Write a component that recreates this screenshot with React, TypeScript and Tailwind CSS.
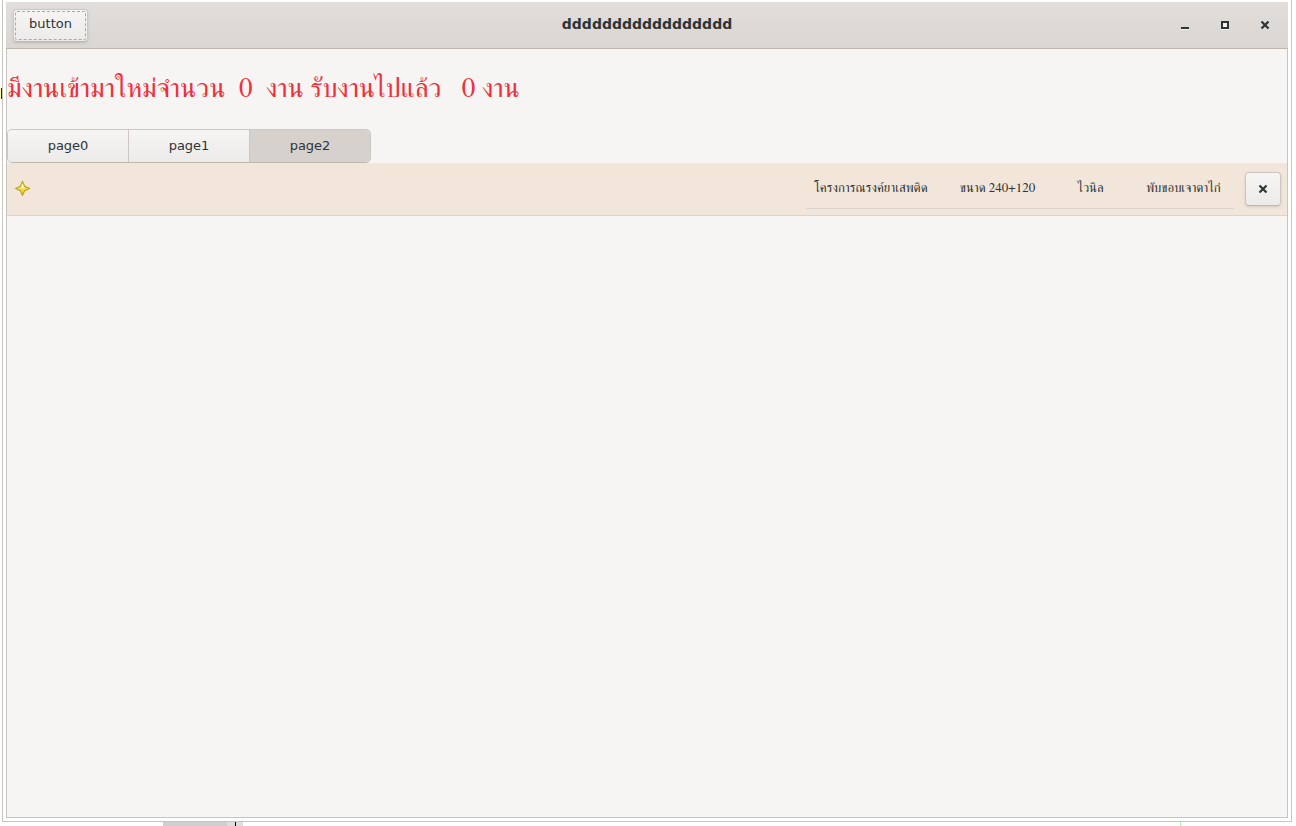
import { useState } from "react";

const pages = ["page0", "page1", "page2"];

function SparkleIcon() {
  return (
    <svg width="16" height="16" viewBox="0 0 16 16" className="mt-[17px]" aria-hidden="true">
      <defs>
        <linearGradient id="gold" x1="0" y1="0" x2="0" y2="1">
          <stop offset="0" stopColor="#fffbd0" />
          <stop offset="0.4" stopColor="#f5e96a" />
          <stop offset="1" stopColor="#e0c010" />
        </linearGradient>
      </defs>
      <path
        d="M7.5 1.2 L9.7 6.4 L14.7 8.5 L9.7 10.6 L7.5 15.6 L5.3 10.6 L.6 8.5 L5.3 6.4 Z"
        fill="url(#gold)"
        stroke="#c4a41c"
        strokeWidth="1.2"
        strokeLinejoin="round"
      />
      <path d="M7.5 4 L8.8 7.2 L7.5 8.5 L6.2 7.2 Z" fill="#fffef0" opacity="0.8" />
    </svg>
  );
}

function CrossIcon() {
  return (
    <svg width="16" height="16" viewBox="0 0 16 16" aria-hidden="true">
      <path d="M4.5 4.5 L11.5 11.5 M11.5 4.5 L4.5 11.5" stroke="#2e3436" strokeWidth="2.2" />
    </svg>
  );
}

function HeaderBar() {
  return (
    <header className="grid h-[47px] shrink-0 grid-cols-[1fr_auto_1fr] items-center border-b border-[#bfb8b1] bg-linear-to-b from-[#e1dedb] to-[#dad6d2] px-[7px]">
      <button
        type="button"
        className="h-[33px] w-[75px] justify-self-start rounded-[4px] border border-[#cdc7c2] border-b-[#bfb8b1] bg-linear-to-b from-[#f6f5f4] to-[#edebe9] p-px text-[13px] shadow-sm"
      >
        <span className="flex h-full items-center justify-center rounded-[2px] border border-dashed border-[#a9a9a6] pb-[2px]">
          button
        </span>
      </button>
      <h1 className="pb-[2px] text-[14px] leading-[20px] font-bold">ddddddddddddddddd</h1>
      <div className="flex gap-6 justify-self-end pr-2">
        <button type="button" aria-label="Minimize" className="size-4">
          <svg width="16" height="16" viewBox="0 0 16 16" aria-hidden="true">
            <path d="M4 10h8v2H4z" fill="#2e3436" />
            <path d="M4 12h8v1H4z" fill="#f4f3f2" />
          </svg>
        </button>
        <button type="button" aria-label="Maximize" className="size-4">
          <svg width="16" height="16" viewBox="0 0 16 16" aria-hidden="true">
            <path d="M4 12h8v1H4z" fill="#f4f3f2" />
            <path d="M5 5h6v6H5z" fill="#f4f3f2" stroke="#2e3436" strokeWidth="2" />
          </svg>
        </button>
        <button type="button" aria-label="Close" className="size-4">
          <CrossIcon />
        </button>
      </div>
    </header>
  );
}

function JobRow() {
  return (
    <section className="flex h-[53px] shrink-0 items-start border-b border-[#d8d4d0] bg-[#f2e6da] pr-[6px] pl-2">
      <SparkleIcon />
      <ul className="mt-[9px] ml-auto grid h-[37px] grid-cols-[145px_93px_93px_93px] border-b border-[#d8d4d0] pr-1 text-center font-['FreeSerif','Noto_Serif_Thai',serif] text-[13px] leading-[34px] whitespace-nowrap">
        <li className="pl-2 text-left">โครงการณรงค์ยาเสพติด</li>
        <li>ขนาด 240+120</li>
        <li>ไวนิล</li>
        <li>พับขอบเจาตาไก่</li>
      </ul>
      <button
        type="button"
        aria-label="Remove"
        className="mt-[9px] ml-[11px] flex h-[34px] w-9 items-center justify-center rounded-[4px] border border-[#cdc7c2] border-b-[#bfb8b1] bg-linear-to-b from-[#f6f5f4] to-[#edebe9] shadow-sm"
      >
        <CrossIcon />
      </button>
    </section>
  );
}

export default function App() {
  const [active, setActive] = useState("page2");

  return (
    <div className="relative flex h-screen flex-col bg-white font-['DejaVu_Sans',sans-serif] text-[#2e3436]">
      <div className="absolute top-[88px] left-0 h-[11px] w-[2px] border-r border-[#332000] bg-[#fffbb0]" />
      <div className="mr-1 ml-[2px] flex grow flex-col border-x border-b border-[#c9c4bf] px-[3px] pt-[2px] pb-[3px]">
        <HeaderBar />
        <main className="flex grow flex-col border-x border-b border-[#c9c4bf] bg-[#f6f5f3]">
          <p className="pt-[22px] font-['FreeSerif','Noto_Serif_Thai',serif] text-[27px] leading-[36px] whitespace-pre text-[#ef2f3c]">
            {"มีงานเข้ามาใหม่จำนวน  0  งาน รับงานไปแล้ว   0 งาน"}
          </p>
          <nav className="mt-[22px] flex h-[34px] w-[364px] shrink-0 overflow-hidden rounded-[5px] border border-[#cdc7c2] border-b-[#bfb8b1] text-[13px]">
            {pages.map((page) => (
              <button
                key={page}
                type="button"
                aria-pressed={active === page}
                onClick={() => setActive(page)}
                className={
                  active === page
                    ? "flex-1 border-r border-[#cdc7c2] bg-[#d6d1cd] last:border-r-0"
                    : "flex-1 border-r border-[#cdc7c2] bg-linear-to-b from-[#f6f5f4] to-[#edebe9] last:border-r-0"
                }
              >
                {page}
              </button>
            ))}
          </nav>
          <JobRow />
        </main>
      </div>
      <div className="flex h-1 shrink-0 items-stretch">
        <div className="ml-[163px] w-16 bg-[#cfcfcf]" />
        <div className="w-2 bg-[#dedede]" />
        <div className="w-px bg-black" />
        <div className="w-[7px] bg-[#dedede]" />
        <div className="mr-[115px] ml-auto w-px bg-[#b4ecb8]" />
      </div>
    </div>
  );
}
